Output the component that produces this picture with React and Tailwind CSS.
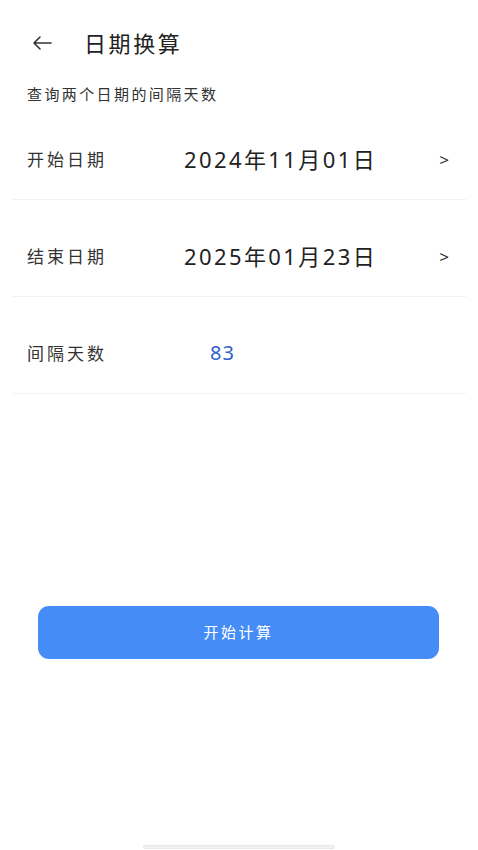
export default function App() {
  const font = { fontFamily: '"Noto Sans", "Noto Sans CJK SC", sans-serif' };
  return (
    <div className="w-[478px] h-[850px] bg-white flex flex-col text-[#2a2a2a]" style={font}>
      <div className="h-[58px] pt-[28px] flex items-center">
        <svg className="ml-[32px] w-[20px] h-[16px]" viewBox="0 0 20 16" fill="none" stroke="#333" strokeWidth="1.6" strokeLinecap="round" strokeLinejoin="round">
          <path d="M19 8H2M8 2L2 8l6 6" />
        </svg>
        <div className="ml-[32px] text-[22px] tracking-[2.6px] leading-none text-[#222]">日期换算</div>
      </div>
      <div className="mt-[27px] h-[18px] flex items-center pl-[27px] text-[15px] tracking-[2.4px] leading-none text-[#333]">
        查询两个日期的间隔天数
      </div>
      <div className="mx-[12px]">
        <div className="h-[97px] pt-[16px] flex items-center border-b border-[#f2f2f2]">
          <div className="w-[172px] pl-[15px] text-[17px] tracking-[3px] leading-none text-[#333]">开始日期</div>
          <div className="text-[22px] tracking-[2.4px] leading-none text-[#222]">2024年11月01日</div>
          <div className="ml-auto mr-[17px] text-[17px] leading-none text-[#333]">&gt;</div>
        </div>
        <div className="h-[97px] pt-[16px] flex items-center border-b border-[#f2f2f2]">
          <div className="w-[172px] pl-[15px] text-[17px] tracking-[3px] leading-none text-[#333]">结束日期</div>
          <div className="text-[22px] tracking-[2.4px] leading-none text-[#222]">2025年01月23日</div>
          <div className="ml-auto mr-[17px] text-[17px] leading-none text-[#333]">&gt;</div>
        </div>
        <div className="h-[97px] pt-[16px] flex items-center border-b border-[#f2f2f2]">
          <div className="w-[172px] pl-[15px] text-[17px] tracking-[3px] leading-none text-[#333]">间隔天数</div>
          <div className="ml-[26px] text-[20px] tracking-[1px] leading-none text-[#2f5fc9]">83</div>
        </div>
      </div>
      <div className="mt-[212px] mx-[38px] w-[401px] h-[53px] rounded-[11px] bg-[#468cf6] flex items-center justify-center">
        <span className="text-[15px] tracking-[2.5px] leading-none text-white">开始计算</span>
      </div>
      <div className="mt-auto mb-[1px] mx-auto w-[192px] h-[4px] rounded-full bg-[#f1f1f1] border border-[#e9e9e9]"></div>
    </div>
  );
}
